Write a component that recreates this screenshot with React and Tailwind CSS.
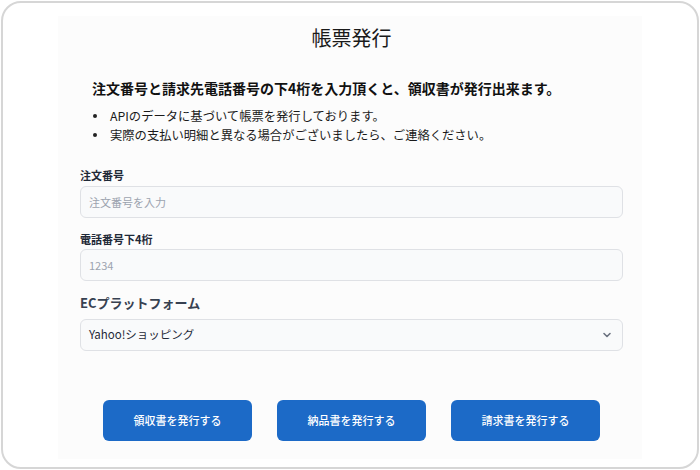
import React from "react";

const notes = [
  "APIのデータに基づいて帳票を発行しております。",
  "実際の支払い明細と異なる場合がございましたら、ご連絡ください。",
];

const buttons = ["領収書を発行する", "納品書を発行する", "請求書を発行する"];

const font = { fontFamily: '"Noto Sans CJK JP", "Noto Sans", sans-serif' };

const App = () => {
  return (
    <div className="w-[700px] h-[470px] bg-white p-px" style={font}>
      <div className="h-full rounded-[20px] border-2 border-[#d6d6d6] bg-white flex justify-center">
        <div className="w-[584px] h-[443px] mt-[13px] bg-[#fcfcfc] pl-[22px] pr-[19px] pt-2">
          {/* Title */}
          <h1 className="text-center text-[20px] leading-[28px] text-[#1a1a1a] font-normal">
            帳票発行
          </h1>

          {/* Intro */}
          <p className="mt-[26px] pl-[12px] text-[14px] leading-[20px] font-bold text-[#111]">
            注文番号と請求先電話番号の下4桁を入力頂くと、領収書が発行出来ます。
          </p>
          <ul className="mt-[9px]">
            {notes.map((n) => (
              <li key={n} className="flex items-center text-[12.3px] leading-[18.5px] text-[#1a1a1a]">
                <span className="w-[4px] h-[4px] rounded-full bg-[#222] ml-[13px] mr-[13px]" />
                {n}
              </li>
            ))}
          </ul>

          {/* Order number */}
          <label className="block mt-[23px] text-[11px] leading-[16px] font-bold text-[#1f2937]">
            注文番号
          </label>
          <input
            type="text"
            placeholder="注文番号を入力"
            className="mt-[3px] block w-full h-[32px] rounded-[6px] border border-[#dfe1e5] bg-[#f9fafb] pl-[8px] text-[11px] text-[#1f2937] placeholder:text-[#9ca3af] outline-none"
          />

          {/* Phone */}
          <label className="block mt-[13px] text-[11px] leading-[16px] font-bold text-[#1f2937]">
            電話番号下4桁
          </label>
          <input
            type="text"
            placeholder="1234"
            className="mt-[2px] block w-full h-[32px] rounded-[6px] border border-[#dfe1e5] bg-[#f9fafb] pl-[8px] text-[11px] text-[#1f2937] placeholder:text-[#9ca3af] outline-none"
          />

          {/* Platform */}
          <label className="block mt-[13px] text-[13px] leading-[18px] font-bold text-[#374151]">
            ECプラットフォーム
          </label>
          <div className="mt-[7px] flex items-center justify-between h-[32px] rounded-[6px] border border-[#dfe1e5] bg-[#f9fafb] pl-[8px] pr-[10px]">
            <span className="text-[11.5px] text-[#1f2937]">Yahoo!ショッピング</span>
            <svg width="10" height="10" viewBox="0 0 10 10" fill="none">
              <path d="M2 3.5l3 3 3-3" stroke="#6b7280" strokeWidth="1.6" strokeLinecap="round" strokeLinejoin="round" />
            </svg>
          </div>

          {/* Actions */}
          <div className="mt-[49px] flex justify-center gap-[25px]">
            {buttons.map((b) => (
              <button
                key={b}
                className="w-[149px] h-[41px] rounded-[6px] bg-[#1c6ac7] text-white text-[11px] font-medium"
              >
                {b}
              </button>
            ))}
          </div>
        </div>
      </div>
    </div>
  );
};

export default App;
